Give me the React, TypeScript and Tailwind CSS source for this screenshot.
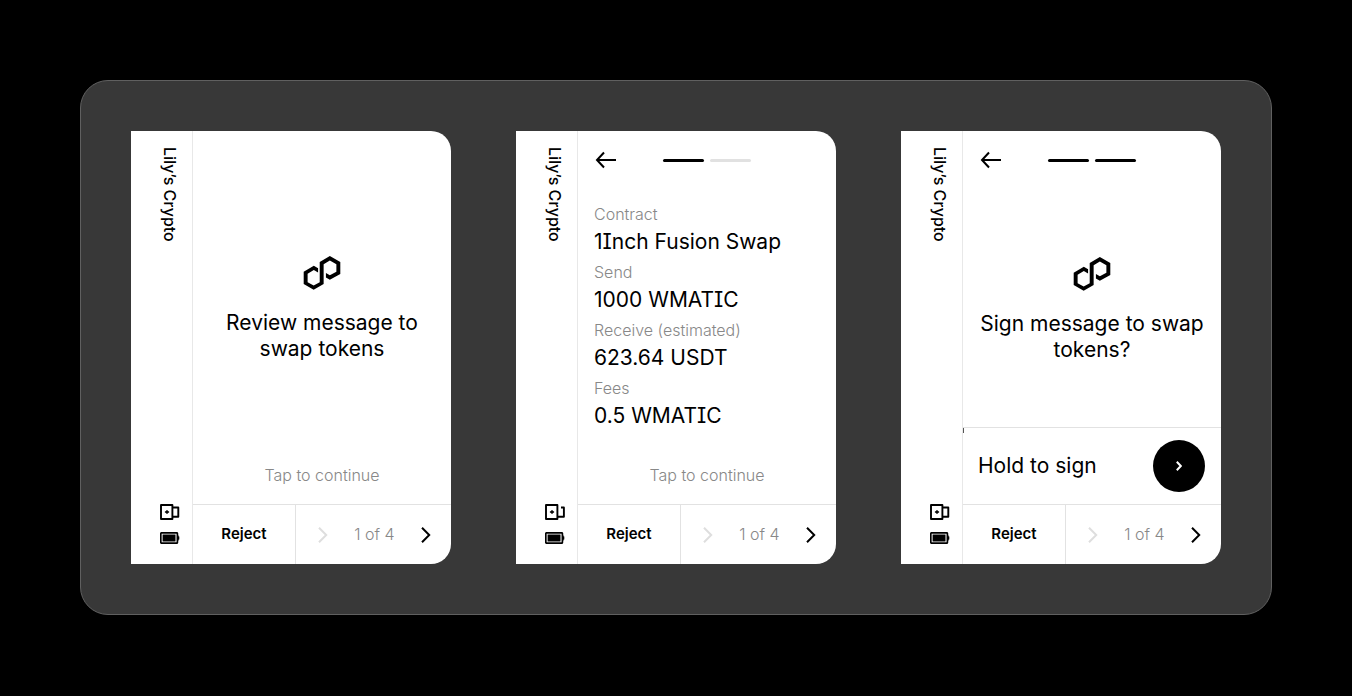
import type { ReactNode } from "react";

function DeviceIcon({ open }: { open?: boolean }) {
  return (
    <svg width="20" height="16" viewBox="0 0 20 16" fill="none" stroke="#000" strokeWidth="1.9" aria-hidden="true">
      <path d="M1 1h11.4v14H1z" strokeLinejoin="round" />
      <path d={open ? "M16 3.5h2.9V12.8H13" : "M13 3.5h5.3v9.3h-5.3"} strokeLinejoin="round" />
      <path d="M7 6.3v3.4M4.9 8h4.2" strokeWidth="1.6" />
    </svg>
  );
}

function BatteryIcon() {
  return (
    <svg width="20" height="12" viewBox="0 0 20 12" aria-hidden="true">
      <rect x="0.8" y="0.8" width="16.6" height="10.4" rx="0.8" fill="none" stroke="#000" strokeWidth="1.7" />
      <rect x="2.6" y="2.5" width="12.9" height="7" />
      <path d="M17 3.4h1.6v1h0.7v3.2h-0.7v1H17z" />
    </svg>
  );
}

function Chevron({ className }: { className: string }) {
  return (
    <svg width="10" height="16" viewBox="0 0 10 16" fill="none" stroke="currentColor" strokeWidth="2" className={className} aria-hidden="true">
      <path d="M1 0.8 8.2 8 1 15.2" />
    </svg>
  );
}

function PolygonLogo() {
  return (
    <svg width="38" height="34" viewBox="71 48 114 104" aria-hidden="true">
      <path d="M103 78 116 85.500V98.500L103 91 84 102V128L102.500 138.500 121 128V66L152 48 184 66.500V103L152 121 140 114V100L152 107 172 96.500V73L152 62 133 73V133.500L102.500 151.500 72 133.500V96Z" />
    </svg>
  );
}

function Steps({ current }: { current: number }) {
  return (
    <header className="relative flex h-[58px] items-center justify-center">
      <button type="button" aria-label="Back" className="absolute left-4">
        <svg width="24" height="18" viewBox="0 0 24 18" fill="none" stroke="#000" strokeWidth="2" aria-hidden="true">
          <path d="M22 9H3M10 1.500 3 9l7 7.500" />
        </svg>
      </button>
      <span className="flex gap-1.5">
        <span className="h-[3px] w-[41px] rounded-full bg-black" />
        <span className={current > 1 ? "h-[3px] w-[41px] rounded-full bg-black" : "h-[3px] w-[41px] rounded-full bg-[#e1e1e1]"} />
      </span>
    </header>
  );
}

function Device({ open, children }: { open?: boolean; children: ReactNode }) {
  return (
    <section className="flex h-[433px] w-80 overflow-hidden rounded-r-[20px] bg-white">
      <aside className="flex w-[62px] shrink-0 flex-col items-end justify-between border-r border-[#e8e8e8] py-4 pr-3">
        <span className="text-base leading-5 font-medium whitespace-nowrap [writing-mode:vertical-rl]">Lily’s Crypto</span>
        <span className="flex flex-col gap-3 pb-1">
          <DeviceIcon open={open} />
          <BatteryIcon />
        </span>
      </aside>
      <div className="flex min-w-0 grow flex-col">
        {children}
        <footer className="flex h-[60px] border-t border-[#e2e2e2]">
          <button type="button" className="w-[103px] border-r border-[#e2e2e2] text-[15px] font-semibold">
            Reject
          </button>
          <nav className="flex grow items-center justify-between pr-5 pl-[22px]">
            <button type="button" aria-label="Previous" disabled>
              <Chevron className="text-[#dedede]" />
            </button>
            <span className="pb-0.5 text-base font-light text-[#888]">1 of 4</span>
            <button type="button" aria-label="Next">
              <Chevron className="text-black" />
            </button>
          </nav>
        </footer>
      </div>
    </section>
  );
}

function Message({ children }: { children: ReactNode }) {
  return (
    <div className="flex flex-col items-center gap-5">
      <PolygonLogo />
      <p className="text-center text-[21px] leading-[26px]">{children}</p>
    </div>
  );
}

const details = [
  ["Contract", "1Inch Fusion Swap"],
  ["Send", "1000 WMATIC"],
  ["Receive (estimated)", "623.64 USDT"],
  ["Fees", "0.5 WMATIC"],
];

export default function App() {
  return (
    <main className="min-h-screen bg-black p-20 font-[Inter,sans-serif] text-black">
      <div className="flex flex-wrap justify-between gap-6 rounded-[28px] border border-[#606060] bg-[#383838] p-[50px]">
        <Device>
          <div className="flex grow flex-col items-center justify-between pt-[125px] pb-[17px]">
            <Message>
              Review message to
              <br />
              swap tokens
            </Message>
            <button type="button" className="text-base font-light text-[#888]">Tap to continue</button>
          </div>
        </Device>
        <Device open>
          <Steps current={1} />
          <div className="flex grow flex-col justify-between pb-[17px]">
            <dl className="px-4 pt-[13px]">
              {details.map(([label, value]) => (
                <div key={label} className="pb-1">
                  <dt className="pb-0.5 text-base font-light text-[#888]">{label}</dt>
                  <dd className="text-[21px] leading-7 [font-feature-settings:'cv08']">{value}</dd>
                </div>
              ))}
            </dl>
            <button type="button" className="text-base font-light text-[#888]">Tap to continue</button>
          </div>
        </Device>
        <Device>
          <Steps current={2} />
          <div className="flex grow flex-col justify-between pt-[68px]">
            <Message>
              Sign message to swap
              <br />
              tokens?
            </Message>
            <button type="button" className="relative flex h-[77px] items-center justify-between border-t border-[#e2e2e2] pr-4 pl-[15px]">
              <span className="absolute top-0 left-0 h-[5px] w-px bg-[#555]" />
              <span className="text-[21px]">Hold to sign</span>
              <span className="flex size-[52px] items-center justify-center rounded-full bg-black">
                <svg width="6" height="10" viewBox="0 0 6 10" fill="none" stroke="#fff" strokeWidth="2" aria-hidden="true">
                  <path d="M0.800 0.800 4.800 5 0.800 9.200" />
                </svg>
              </span>
            </button>
          </div>
        </Device>
      </div>
    </main>
  );
}
